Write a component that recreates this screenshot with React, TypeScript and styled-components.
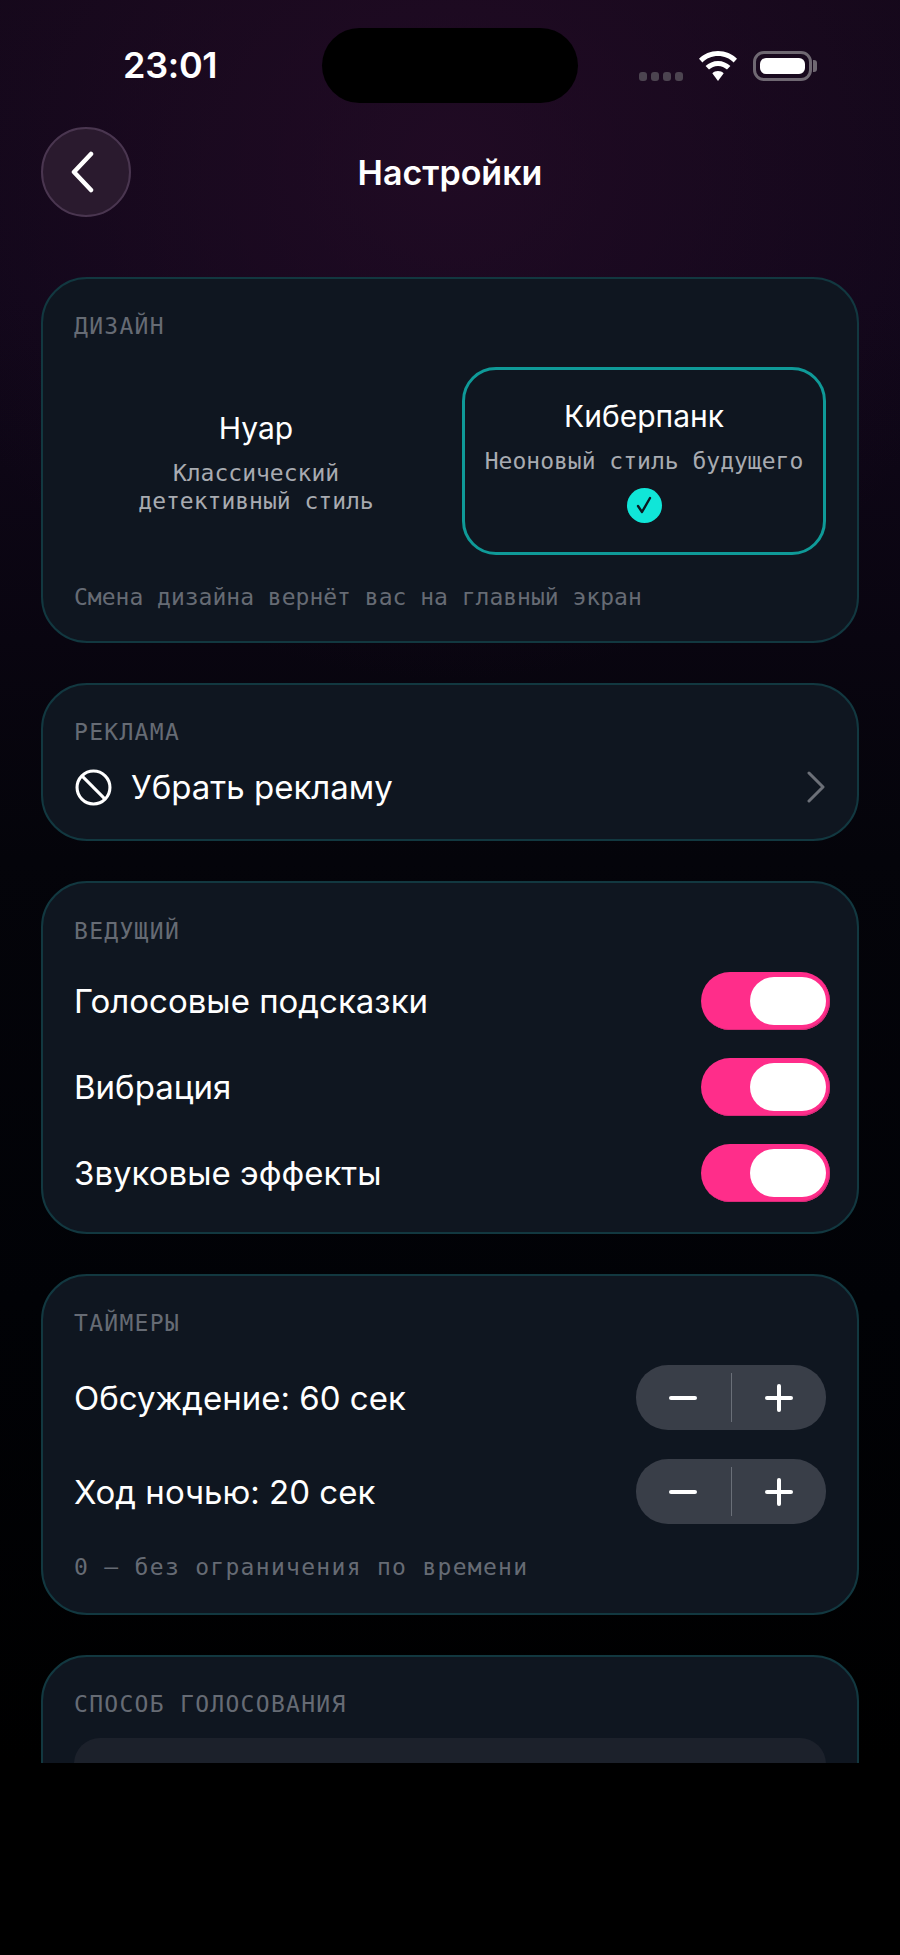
import * as React from 'react';
import styled, { createGlobalStyle } from 'styled-components';

const GlobalStyle = createGlobalStyle`
  html, body {
    margin: 0;
    padding: 0;
    background: #000;
  }
  * {
    box-sizing: border-box;
  }
`;

const sans = `Inter, "Noto Sans", "Liberation Sans", sans-serif`;
const mono = `"DejaVu Sans Mono", "Liberation Mono", monospace`;

const Page = styled.div`
  width: 900px;
  height: 1955px;
  background: #000;
`;

const Screen = styled.div`
  height: 1763px;
  overflow: hidden;
  padding: 28px 41px 0;
  font-family: ${sans};
  color: #fff;
  background:
    radial-gradient(ellipse 560px 520px at 450px 160px, rgba(38, 12, 40, 0.7), rgba(38, 12, 40, 0) 100%),
    linear-gradient(180deg, #14081a 0, #11071a 300px, #090510 640px, #04040a 860px, #010206 1300px, #000 1763px);
`;

const StatusBar = styled.div`
  display: grid;
  grid-template-columns: 1fr 256px 1fr;
  height: 75px;
`;

const Clock = styled.div`
  font-size: 36px;
  font-weight: 600;
  line-height: 75px;
  padding-left: 82px;
  letter-spacing: -0.3px;
`;

const Island = styled.div`
  background: #000;
  border-radius: 38px;
`;

const StatusIcons = styled.div`
  display: flex;
  align-self: center;
  align-items: center;
  justify-content: flex-end;
  margin-right: 42px;
`;

const SignalDots = styled.div`
  display: flex;
  align-self: flex-end;
  gap: 4px;
  margin-right: 15px;
`;

const Dot = styled.span`
  width: 8px;
  height: 9px;
  border-radius: 3px;
  background: #4c4450;
`;

const BatteryShell = styled.div`
  display: flex;
  width: 59px;
  height: 30px;
  margin-left: 15px;
  padding: 4px;
  border: 3px solid #6f6872;
  border-radius: 11px;
`;

const BatteryFill = styled.div`
  flex: 1;
  background: #fff;
  border-radius: 6px;
`;

const BatteryCap = styled.div`
  width: 4px;
  height: 12px;
  background: #6f6872;
  border-radius: 0 3px 3px 0;
  margin-left: 1px;
`;

const Header = styled.header`
  display: grid;
  grid-template-columns: 90px 1fr 90px;
  align-items: center;
  margin: 24px 0 60px;
`;

const BackButton = styled.button`
  display: flex;
  align-items: center;
  justify-content: center;
  width: 90px;
  height: 90px;
  padding: 0 6px 0 0;
  background: #2a1a2e;
  border: 2px solid #4a3650;
  border-radius: 50%;
  color: #fff;
`;

const Title = styled.h1`
  margin: 0;
  text-align: center;
  font-size: 34px;
  font-weight: 600;
`;

const Cards = styled.div`
  display: flex;
  flex-direction: column;
  gap: 40px;
`;

const Card = styled.section<{ $gap: number; $top?: number; $pad?: number }>`
  display: flex;
  flex-direction: column;
  gap: ${(p) => p.$gap}px;
  padding: ${(p) => p.$top ?? 32}px 31px ${(p) => p.$pad ?? 30}px;
  background: #0f1620;
  border: 2px solid #123840;
  border-radius: 46px;
`;

const SectionLabel = styled.div`
  height: 28px;
  font-family: ${mono};
  font-size: 23px;
  line-height: 30px;
  letter-spacing: 1.3px;
  color: #666b74;
`;

const Options = styled.div`
  display: grid;
  grid-template-columns: 1fr 1fr;
  gap: 24px;
`;

const Option = styled.div<{ $active?: boolean }>`
  display: flex;
  flex-direction: column;
  align-items: center;
  justify-content: center;
  height: 188px;
  padding: ${(p) => (p.$active ? '0 0 2px' : '2px 0 0')};
  text-align: center;
  border: 3px solid ${(p) => (p.$active ? '#0f9a98' : 'transparent')};
  border-radius: 34px;
`;

const OptionName = styled.div`
  font-size: 30px;
  line-height: 36px;
  margin-bottom: 13px;
`;

const OptionDesc = styled.div`
  font-family: ${mono};
  font-size: 23px;
  line-height: 28px;
  color: #a8abb1;
`;

const CheckBadge = styled.div`
  display: flex;
  align-items: center;
  justify-content: center;
  width: 35px;
  height: 35px;
  margin-top: 13px;
  background: #10e6d8;
  border-radius: 50%;
  color: #0b1a22;
`;

const Hint = styled.div<{ $wide?: boolean }>`
  height: 28px;
  font-family: ${mono};
  font-size: 23px;
  line-height: 28px;
  letter-spacing: ${(p) => (p.$wide ? 1.3 : 0)}px;
  color: #666b74;
`;

const Row = styled.div`
  display: flex;
  align-items: center;
  justify-content: space-between;
`;

const RowLabel = styled.div`
  font-size: 33px;
  line-height: 48px;
`;

const AdRow = styled(Row)`
  height: 48px;
`;

const AdLead = styled.div`
  display: flex;
  align-items: center;
  gap: 19px;
  margin-left: 1px;
`;

const Toggle = styled.div`
  display: flex;
  justify-content: flex-end;
  align-items: center;
  width: 129px;
  height: 58px;
  margin-right: -4px;
  padding-right: 4px;
  background: #ff2d8a;
  border-radius: 29px;
  box-shadow: inset -1px -1px 0 #d92a78;
`;

const ToggleThumb = styled.div`
  width: 76px;
  height: 48px;
  background: #fff;
  border-radius: 24px;
`;

const Stepper = styled.div`
  display: flex;
  align-items: center;
  width: 190px;
  height: 65px;
  background: #393e48;
  border-radius: 32px;
`;

const StepButton = styled.div`
  flex: 1;
  display: flex;
  align-items: center;
  justify-content: center;
  color: #fff;
`;

const StepDivider = styled.div`
  width: 1px;
  height: 49px;
  background: #6a6f78;
`;

const VotePanel = styled.div`
  height: 120px;
  background: #1c212b;
  border-radius: 26px;
`;

const Wifi = () => (
  <svg width="40" height="30" viewBox="0 0 40 30" fill="#fff">
    <path d="M20 0C12.5 0 5.8 3 1 7.8l3.4 3.6C8.4 7.4 13.9 5 20 5s11.6 2.4 15.6 6.4L39 7.8C34.2 3 27.5 0 20 0z" />
    <path d="M20 10c-4.8 0-9.2 2-12.4 5.1l3.4 3.5c2.3-2.3 5.5-3.7 9-3.7s6.7 1.4 9 3.7l3.4-3.5C29.2 12 24.8 10 20 10z" />
    <path d="M20 20c-2.2 0-4.2.9-5.7 2.3L20 30l5.7-7.7C24.2 20.9 22.2 20 20 20z" />
  </svg>
);

const ChevronLeft = () => (
  <svg width="28" height="42" viewBox="0 0 28 42" fill="none" stroke="#fff" strokeWidth="4.5" strokeLinecap="round" strokeLinejoin="round">
    <path d="M22 3 5 21l17 18" />
  </svg>
);

const ChevronRight = () => (
  <svg width="20" height="32" viewBox="0 0 20 32" fill="none" stroke="#6c7078" strokeWidth="3" strokeLinecap="round" strokeLinejoin="round">
    <path d="M3 2l14 14L3 30" />
  </svg>
);

const BanIcon = () => (
  <svg width="37" height="37" viewBox="0 0 36 36" fill="none" stroke="#fff" strokeWidth="3">
    <circle cx="18" cy="18" r="16" />
    <path d="M7 7l22 22" />
  </svg>
);

const CheckIcon = () => (
  <svg width="20" height="20" viewBox="0 0 20 20" fill="none" stroke="currentColor" strokeWidth="2.4" strokeLinecap="round" strokeLinejoin="round">
    <path d="M4 11l4 6 8-14" />
  </svg>
);

const Minus = () => (
  <svg width="28" height="4" viewBox="0 0 28 4">
    <rect width="28" height="4" rx="2" fill="currentColor" />
  </svg>
);

const Plus = () => (
  <svg width="28" height="28" viewBox="0 0 28 28" fill="currentColor">
    <rect y="12" width="28" height="4" rx="2" />
    <rect x="12" width="4" height="28" rx="2" />
  </svg>
);

const NumberStepper = () => (
  <Stepper>
    <StepButton>
      <Minus />
    </StepButton>
    <StepDivider />
    <StepButton>
      <Plus />
    </StepButton>
  </Stepper>
);

const hostToggles = ['Голосовые подсказки', 'Вибрация', 'Звуковые эффекты'];
const timers = ['Обсуждение: 60 сек', 'Ход ночью: 20 сек'];

export default function App() {
  return (
    <Page>
      <GlobalStyle />
      <Screen>
        <StatusBar>
          <Clock>23:01</Clock>
          <Island />
          <StatusIcons>
            <SignalDots>
              <Dot />
              <Dot />
              <Dot />
              <Dot />
            </SignalDots>
            <Wifi />
            <BatteryShell>
              <BatteryFill />
            </BatteryShell>
            <BatteryCap />
          </StatusIcons>
        </StatusBar>

        <Header>
          <BackButton>
            <ChevronLeft />
          </BackButton>
          <Title>Настройки</Title>
        </Header>

        <Cards>
          <Card $gap={28}>
            <SectionLabel>ДИЗАЙН</SectionLabel>
            <Options>
              <Option>
                <OptionName>Нуар</OptionName>
                <OptionDesc>
                  Классический
                  <br />
                  детективный стиль
                </OptionDesc>
              </Option>
              <Option $active>
                <OptionName>Киберпанк</OptionName>
                <OptionDesc>Неоновый стиль будущего</OptionDesc>
                <CheckBadge>
                  <CheckIcon />
                </CheckBadge>
              </Option>
            </Options>
            <Hint>Смена дизайна вернёт вас на главный экран</Hint>
          </Card>

          <Card $gap={18} $pad={28}>
            <SectionLabel>РЕКЛАМА</SectionLabel>
            <AdRow>
              <AdLead>
                <BanIcon />
                <RowLabel>Убрать рекламу</RowLabel>
              </AdLead>
              <ChevronRight />
            </AdRow>
          </Card>

          <Card $gap={28} $top={33} $pad={30}>
            <SectionLabel>ВЕДУЩИЙ</SectionLabel>
            {hostToggles.map((label) => (
              <Row key={label}>
                <RowLabel>{label}</RowLabel>
                <Toggle>
                  <ToggleThumb />
                </Toggle>
              </Row>
            ))}
          </Card>

          <Card $gap={29} $top={32} $pad={32}>
            <SectionLabel>ТАЙМЕРЫ</SectionLabel>
            {timers.map((label) => (
              <Row key={label}>
                <RowLabel>{label}</RowLabel>
                <NumberStepper />
              </Row>
            ))}
            <Hint $wide>0 — без ограничения по времени</Hint>
          </Card>

          <Card $gap={21}>
            <SectionLabel>СПОСОБ ГОЛОСОВАНИЯ</SectionLabel>
            <VotePanel />
          </Card>
        </Cards>
      </Screen>
    </Page>
  );
}
